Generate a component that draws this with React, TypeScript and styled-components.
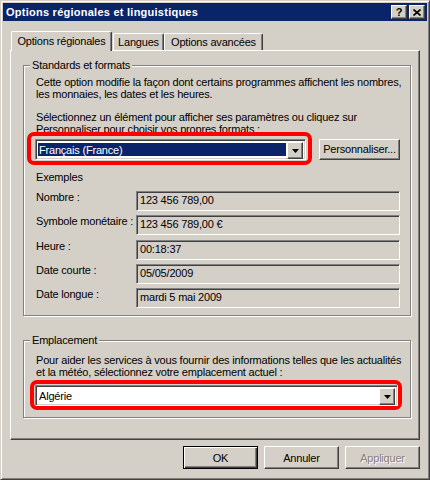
import React from "react";
import styled, { createGlobalStyle, css } from "styled-components";

const FACE = "#d4d0c8";
const NAVY = "#0a246a";

const GlobalStyle = createGlobalStyle`
  html, body { margin: 0; padding: 0; background: ${FACE}; }
  body {
    font-family: "Liberation Sans", Arial, sans-serif;
    font-size: 11px;
    letter-spacing: -0.2px;
    color: #000;
  }
  * { box-sizing: border-box; }
`;

const raised = css`
  border: 1px solid;
  border-color: #fff #404040 #404040 #fff;
  box-shadow: inset -1px -1px #808080;
  background: ${FACE};
`;

const sunken = css`
  border: 1px solid;
  border-color: #808080 #fff #fff #808080;
  box-shadow: inset 1px 1px #404040, inset -1px -1px ${FACE};
`;

const Window = styled.div`
  width: 430px;
  height: 480px;
  display: flex;
  flex-direction: column;
  background: ${FACE};
  border: 1px solid;
  border-color: ${FACE} #404040 #404040 ${FACE};
  box-shadow: inset 1px 1px #fff, inset -1px -1px #808080;
  padding: 2px;
`;

const TitleBar = styled.div`
  height: 18px;
  background: ${NAVY};
  display: flex;
  align-items: center;
  padding: 0 2px 0 3px;
`;

const Title = styled.div`
  flex: 1;
  color: #fff;
  font-weight: bold;
  font-size: 11px;
  letter-spacing: 0.25px;
  line-height: 14px;
  white-space: nowrap;
`;

const CaptionButton = styled.div<{ $gap?: number }>`
  ${raised};
  width: 16px;
  height: 14px;
  margin-left: ${(p) => p.$gap ?? 0}px;
  display: flex;
  align-items: center;
  justify-content: center;
  font-weight: bold;
  font-size: 11px;
  line-height: 12px;
  letter-spacing: 0;
  color: #000;
`;

const Body = styled.div`
  flex: 1;
  display: flex;
  flex-direction: column;
  padding: 10px 7px 0 7px;
`;

const TabRow = styled.div`
  display: flex;
  align-items: flex-end;
  height: 19px;
  padding-left: 1px;
  position: relative;
  z-index: 1;
`;

const Tab = styled.div<{ $w: number; $active?: boolean; $ml?: number }>`
  width: ${(p) => p.$w}px;
  height: ${(p) => (p.$active ? 20 : 17)}px;
  margin-bottom: ${(p) => (p.$active ? -1 : 0)}px;
  margin-left: ${(p) => p.$ml ?? 0}px;
  background: ${FACE};
  border-top: 1px solid #fff;
  border-left: 1px solid #fff;
  border-right: 1px solid #404040;
  box-shadow: inset -1px 0 #808080;
  border-radius: 2px 2px 0 0;
  display: flex;
  align-items: center;
  justify-content: center;
  padding-bottom: ${(p) => (p.$active ? 1 : 0)}px;
  white-space: nowrap;
`;

const Panel = styled.div`
  ${raised};
  height: 390px;
  display: flex;
  flex-direction: column;
  padding: 14px 8px 0 12px;
`;

const GroupBox = styled.div<{ $mt?: number; $pt: number; $pb: number }>`
  position: relative;
  margin-top: ${(p) => p.$mt ?? 0}px;
  border: 1px solid #808080;
  box-shadow: inset 1px 1px #fff, 1px 1px #fff;
  padding: ${(p) => p.$pt}px 8px ${(p) => p.$pb}px 12px;
  display: flex;
  flex-direction: column;
`;

const Legend = styled.div`
  position: absolute;
  top: -7px;
  left: 6px;
  padding: 0 2px;
  background: ${FACE};
  line-height: 12px;
`;

const Para = styled.div<{ $mt?: number }>`
  line-height: 12px;
  margin-top: ${(p) => p.$mt ?? 0}px;
  white-space: nowrap;
`;

const ComboRow = styled.div<{ $ml: number }>`
  display: flex;
  align-items: center;
  margin-left: ${(p) => p.$ml}px;
`;

const Highlight = styled.div<{ $w: number; $mt: number; $pad: string }>`
  position: relative;
  width: ${(p) => p.$w}px;
  margin-top: ${(p) => p.$mt}px;
  border: 4px solid #ff0000;
  border-radius: 7px;
  padding: ${(p) => p.$pad};
`;

const Combo = styled.div`
  ${sunken};
  background: #fff;
  height: 21px;
  display: flex;
  padding: 2px;
`;

const ComboValue = styled.div<{ $selected?: boolean }>`
  flex: 1;
  margin: 1px 1px 1px 0;
  padding: 0 2px 0 1px;
  line-height: 14px;
  background: ${(p) => (p.$selected ? NAVY : "transparent")};
  color: ${(p) => (p.$selected ? "#fff" : "#000")};
  white-space: nowrap;
`;

const ArrowButton = styled.div`
  ${raised};
  width: 16px;
  height: 17px;
  display: flex;
  align-items: center;
  justify-content: center;
`;

const PushButton = styled.div<{
  $w: number;
  $h?: number;
  $mt?: number;
  $default?: boolean;
  $disabled?: boolean;
  $ml?: number;
}>`
  ${raised};
  width: ${(p) => p.$w}px;
  height: ${(p) => p.$h ?? 23}px;
  margin-left: ${(p) => p.$ml ?? 0}px;
  margin-top: ${(p) => p.$mt ?? 0}px;
  display: flex;
  align-items: center;
  justify-content: center;
  white-space: nowrap;
  color: ${(p) => (p.$disabled ? "#808080" : "#000")};
  text-shadow: ${(p) => (p.$disabled ? "1px 1px #fff" : "none")};
  ${(p) =>
    p.$default &&
    css`
      border: 1px solid #000;
      box-shadow: inset 1px 1px #fff, inset -1px -1px #404040, inset -2px -2px #808080;
    `}
`;

const SectionLabel = styled.div<{ $mt: number }>`
  margin-top: ${(p) => p.$mt}px;
  line-height: 12px;
`;

const Grid = styled.div`
  display: grid;
  grid-template-columns: 100px 264px;
  grid-auto-rows: 20px;
  row-gap: 4.25px;
  margin-top: 8px;
`;

const RowLabel = styled.div`
  line-height: 12px;
  white-space: nowrap;
`;

const Field = styled.div`
  ${sunken};
  background: ${FACE};
  padding: 0 3px;
  line-height: 16px;
  white-space: nowrap;
`;

const ButtonRow = styled.div`
  display: flex;
  justify-content: flex-end;
  margin-top: 6px;
`;

const DownArrow = () => (
  <svg width="7" height="4" viewBox="0 0 7 4">
    <polygon points="0,0 7,0 3.5,4" fill="#000" />
  </svg>
);

const CloseGlyph = () => (
  <svg width="8" height="7" viewBox="0 0 8 7">
    <path d="M0.5 0.5 L7.5 6.5 M7.5 0.5 L0.5 6.5" stroke="#000" strokeWidth="1.6" />
  </svg>
);

const rows: [string, string][] = [
  ["Nombre :", "123 456 789,00"],
  ["Symbole monétaire :", "123 456 789,00 €"],
  ["Heure :", "00:18:37"],
  ["Date courte :", "05/05/2009"],
  ["Date longue :", "mardi 5 mai 2009"],
];

export default function App() {
  return (
    <>
      <GlobalStyle />
      <Window>
        <TitleBar>
          <Title>Options régionales et linguistiques</Title>
          <CaptionButton>?</CaptionButton>
          <CaptionButton $gap={2}>
            <CloseGlyph />
          </CaptionButton>
        </TitleBar>
        <Body>
          <TabRow>
            <Tab $w={101} $active>
              Options régionales
            </Tab>
            <Tab $w={51} $ml={1}>
              Langues
            </Tab>
            <Tab $w={99}>Options avancées</Tab>
          </TabRow>
          <Panel>
            <GroupBox $pt={10} $pb={7}>
              <Legend>Standards et formats</Legend>
              <Para>
                Cette option modifie la façon dont certains programmes affichent les nombres,
                <br />
                les monnaies, les dates et les heures.
              </Para>
              <Para $mt={11}>
                Sélectionnez un élément pour afficher ses paramètres ou cliquez sur
                <br />
                Personnaliser pour choisir vos propres formats :
              </Para>
              <ComboRow $ml={-9}>
                <Highlight $w={285} $mt={-3} $pad="3px 2px 1px 4px">
                  <Combo>
                    <ComboValue $selected>Français (France)</ComboValue>
                    <ArrowButton>
                      <DownArrow />
                    </ArrowButton>
                  </Combo>
                </Highlight>
                <PushButton $w={81} $h={21} $mt={-2} $ml={7}>
                  Personnaliser...
                </PushButton>
              </ComboRow>
              <SectionLabel $mt={6}>Exemples</SectionLabel>
              <Grid>
                {rows.map(([label, value]) => (
                  <React.Fragment key={label}>
                    <RowLabel>{label}</RowLabel>
                    <Field>{value}</Field>
                  </React.Fragment>
                ))}
              </Grid>
            </GroupBox>
            <GroupBox $mt={24} $pt={13} $pb={7}>
              <Legend>Emplacement</Legend>
              <Para>
                Pour aider les services à vous fournir des informations telles que les actualités
                <br />
                et la météo, sélectionnez votre emplacement actuel :
              </Para>
              <ComboRow $ml={-6}>
                <Highlight $w={374} $mt={2} $pad="1px 0 0 1px">
                  <Combo>
                    <ComboValue>Algérie</ComboValue>
                    <ArrowButton>
                      <DownArrow />
                    </ArrowButton>
                  </Combo>
                </Highlight>
              </ComboRow>
            </GroupBox>
          </Panel>
          <ButtonRow>
            <PushButton $w={75} $default>
              OK
            </PushButton>
            <PushButton $w={75} $ml={6}>
              Annuler
            </PushButton>
            <PushButton $w={75} $ml={6} $disabled>
              Appliquer
            </PushButton>
          </ButtonRow>
        </Body>
      </Window>
    </>
  );
}
